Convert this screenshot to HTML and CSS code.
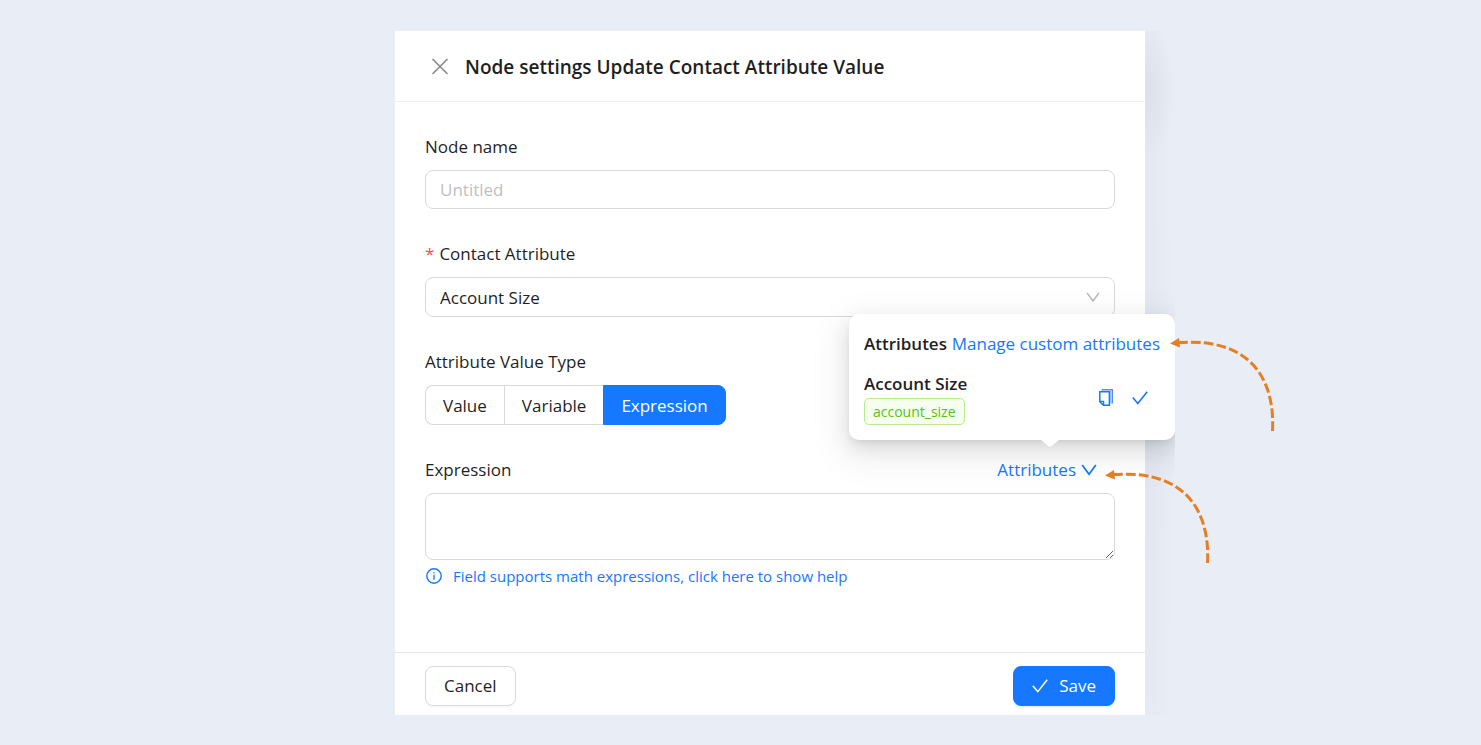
FILE: index.html
```html
<!DOCTYPE html>
<html lang="en">
<head>
<meta charset="utf-8">
<meta name="viewport" content="width=device-width, initial-scale=1">
<title>Node settings</title>
<link rel="stylesheet" href="styles.css">
</head>
<body>
<main class="page">
  <div class="scene">
    <div class="capture">
      <form class="panel">
        <header class="panel-header">
          <button class="icon-button" type="button" aria-label="Close">
            <svg width="18" height="18" viewBox="0 0 18 18" fill="none" stroke="#8c8c8c" stroke-width="1.7"><path d="M1.500 1 16.500 16M16.500 1 1.500 16"/></svg>
          </button>
          <h1 class="panel-title">Node settings Update Contact Attribute Value</h1>
        </header>

        <div class="panel-body">
          <div class="field">
            <label class="label" for="node-name">Node name</label>
            <input class="control text-input" id="node-name" type="text" placeholder="Untitled">
          </div>

          <div class="field">
            <label class="label" for="attribute"><span class="required">*</span>Contact Attribute</label>
            <div class="select-wrap">
              <select class="control select" id="attribute"><option>Account Size</option></select>
              <svg class="select-arrow" width="14" height="10" viewBox="0 0 14 10" fill="none" stroke="#b5b5b5" stroke-width="1.4"><path d="M1 .8 7 9 13 .8"/></svg>
            </div>
          </div>

          <fieldset class="field">
            <legend class="label">Attribute Value Type</legend>
            <div class="segments">
              <label class="segment"><input type="radio" name="value-type">Value</label>
              <label class="segment"><input type="radio" name="value-type">Variable</label>
              <label class="segment"><input type="radio" name="value-type" checked>Expression</label>
            </div>
          </fieldset>

          <div class="field">
            <div class="label-row">
              <label class="label" for="expression">Expression</label>
              <div class="dropdown">
                <button class="dropdown-button" type="button" aria-expanded="true">Attributes
                  <svg width="16" height="12" viewBox="0 0 16 12" fill="none" stroke="#1677ff" stroke-width="1.7"><path d="M1.200 1 8 10.300 14.800 1"/></svg>
                </button>
                <section class="popover">
                  <div class="popover-head">
                    <h2 class="popover-title">Attributes</h2>
                    <a class="link" href="#">Manage custom attributes</a>
                  </div>
                  <div class="attribute">
                    <div class="attribute-info">
                      <strong class="attribute-name">Account Size</strong>
                      <span class="tag">account_size</span>
                    </div>
                    <div class="attribute-actions">
                      <button class="icon-button" type="button" aria-label="Copy">
                        <svg width="14" height="17" viewBox="0 0 14 17" fill="none" stroke="#1677ff"><path d="M2.500 .7H13.300V14.500" stroke="#4a90ff" stroke-width="1.400"/><path d="M11.800 2V14.500" stroke="#a8caff" stroke-width="1.600"/><path d="M.8 2.800H10.400V16.200H4.400L.8 12.600Z" fill="#fff" stroke-width="1.500"/><path d="M.8 12.400H4.600V16.200" stroke-width="1.300"/></svg>
                      </button>
                      <button class="icon-button" type="button" aria-label="Select">
                        <svg width="16" height="14" viewBox="0 0 16 14" fill="none" stroke="#1677ff" stroke-width="1.600"><path d="M.8 6.600 5.800 12.600 15.200 .8"/></svg>
                      </button>
                    </div>
                  </div>
                </section>
              </div>
            </div>
            <textarea class="control textarea" id="expression"></textarea>
            <a class="help" href="#">
              <svg width="16" height="16" viewBox="0 0 16 16" fill="none" stroke="#1677ff"><circle cx="8" cy="8" r="7.200" stroke-width="1.400"/><path d="M8 6.800V11.800M8 4.200V5.600" stroke-width="1.300"/></svg>
              Field supports math expressions, click here to show help
            </a>
          </div>
        </div>

        <footer class="panel-footer">
          <button class="button" type="button">Cancel</button>
          <button class="button button-primary" type="submit">
            <svg width="16" height="14" viewBox="0 0 16 14" fill="none" stroke="#fff" stroke-width="1.500"><path d="M.8 6.800 5.800 12.600 15.200 .8"/></svg>
            Save
          </button>
        </footer>
      </form>
    </div>

    <svg class="arrow arrow-upper" width="106" height="98" viewBox="0 0 106 98" fill="none" stroke="#e67e22" stroke-width="3"><path d="M8 8.600C85 3 105 50 102.500 97" pathLength="138.6" stroke-dasharray="8.800 3"/><path d="M0 9.500 9 4 10 13.500Z" fill="#e67e22" stroke="none"/></svg>
    <svg class="arrow arrow-lower" width="106" height="98" viewBox="0 0 106 98" fill="none" stroke="#e67e22" stroke-width="3"><path d="M8 8.600C85 3 105 50 102.500 97" pathLength="138.6" stroke-dasharray="8.800 3"/><path d="M0 9.500 9 4 10 13.500Z" fill="#e67e22" stroke="none"/></svg>
  </div>
</main>
</body>
</html>
```
FILE: styles.css
```css
* { box-sizing: border-box; }

body {
  margin: 0;
  background: #e9eef6;
  color: #1f1f1f;
  font: 17px/28px "Open Sans", "Noto Sans", sans-serif;
}

button, input, select, textarea { font: inherit; color: inherit; }
button { cursor: pointer; }
a { color: #1677ff; text-decoration: none; }

.page {
  display: grid;
  grid-template-columns: minmax(0, 395fr) minmax(0, 780px) minmax(0, 306fr);
  padding: 31px 0 30px;
}

.scene { grid-column: 2; position: relative; }

.capture {
  overflow: hidden;
  padding-right: 30px;
  background:
    radial-gradient(ellipse 30px 75px at calc(100% - 30px) 60px, #dadfe8, transparent) no-repeat,
    radial-gradient(ellipse 30px 500px at calc(100% - 30px) 400px, #e1e6ee, transparent) no-repeat;
}

.panel { background: #fff; }

.panel-header {
  display: flex;
  align-items: center;
  gap: 16px;
  height: 71px;
  padding: 1px 36px 0;
  border-bottom: 1px solid #f0f0f0;
}

.panel-title { margin: 0; font-size: 19px; font-weight: 600; }

.icon-button {
  display: flex;
  padding: 0;
  border: 0;
  background: none;
}

.panel-body {
  display: flex;
  flex-direction: column;
  gap: 31px;
  padding: 31px 30px 64px;
}

.field { margin: 0; padding: 0; border: 0; min-width: 0; }
.label { display: block; padding: 0; margin-bottom: 9px; }
.required { margin-right: 5px; color: #ff4d4f; }

.control {
  display: block;
  width: 100%;
  border: 1px solid #d9d9d9;
  border-radius: 8px;
  background: #fff;
  outline: 0;
}

.text-input { height: 39px; padding: 0 14px; }
.text-input::placeholder { color: #bfbfbf; opacity: 1; }
.select-wrap { position: relative; }
.select { height: 40px; padding: 1px 14px 0; appearance: none; }
.select-arrow { position: absolute; right: 15px; top: 15px; pointer-events: none; }

.segments { display: inline-flex; vertical-align: top; }

.segment {
  height: 40px;
  padding: 0 17px;
  border: 1px solid #d9d9d9;
  border-right-width: 0;
  line-height: 39px;
}
.segment:first-child { border-radius: 8px 0 0 8px; }
.segment:last-child { border-right-width: 1px; border-radius: 0 8px 8px 0; }
.segment:has(:checked) { border-color: #1677ff; background: #1677ff; color: #fff; }
.segment input { position: absolute; opacity: 0; pointer-events: none; }

.label-row { display: flex; justify-content: space-between; padding-right: 18px; }
.dropdown { position: relative; height: 28px; }
.dropdown-button {
  display: flex;
  align-items: center;
  gap: 5px;
  padding: 0;
  border: 0;
  background: none;
  color: #1677ff;
}

.popover {
  position: absolute;
  right: -78px;
  bottom: 44px;
  width: 326px;
  height: 126px;
  padding: 16px 15px;
  border-radius: 10px;
  background: #fff;
  box-shadow: 0 8px 20px rgba(0, 0, 0, .1), 0 4px 8px -4px rgba(0, 0, 0, .12), 0 12px 35px 10px rgba(0, 0, 0, .06);
}
.popover::after {
  content: "";
  position: absolute;
  right: 116px;
  bottom: -7px;
  width: 18px;
  height: 7px;
  background: #fff;
  clip-path: polygon(0 0, 100% 0, 60% 85%, 50% 100%, 40% 85%);
}
.popover-head { display: flex; justify-content: space-between; margin-bottom: 12px; white-space: nowrap; }
.popover-title { margin: 0; font-size: 17px; font-weight: 600; }
.attribute { display: flex; align-items: center; justify-content: space-between; }
.attribute-info { display: flex; flex-direction: column; align-items: flex-start; }
.attribute-name { font-weight: 600; }
.attribute-actions { display: flex; align-items: center; gap: 19px; padding-right: 12px; }

.tag {
  padding: 0 8px;
  border: 1px solid #b7eb8f;
  border-radius: 5px;
  background: #f6ffed;
  color: #52c41a;
  font-size: 14px;
  line-height: 25px;
}

.textarea { height: 67px; padding: 5px 14px; resize: vertical; }

.help {
  display: flex;
  align-items: center;
  gap: 11px;
  width: fit-content;
  margin-top: 4px;
  padding-left: 1px;
  font-size: 15px;
  line-height: 24px;
}

.panel-footer {
  display: flex;
  justify-content: space-between;
  padding: 13px 30px 9px;
  border-top: 1px solid #e8e8e8;
}

.button {
  display: flex;
  align-items: center;
  gap: 11px;
  height: 40px;
  padding: 0 18px;
  border: 1px solid #d9d9d9;
  border-radius: 8px;
  background: #fff;
  box-shadow: 0 2px 0 rgba(0, 0, 0, .02);
}
.button-primary { border-color: #1677ff; background: #1677ff; color: #fff; box-shadow: 0 2px 0 rgba(5, 145, 255, .1); }

.arrow { position: absolute; pointer-events: none; }
.arrow-upper { right: -101px; top: 303px; }
.arrow-lower { right: -36px; top: 435px; }
```
